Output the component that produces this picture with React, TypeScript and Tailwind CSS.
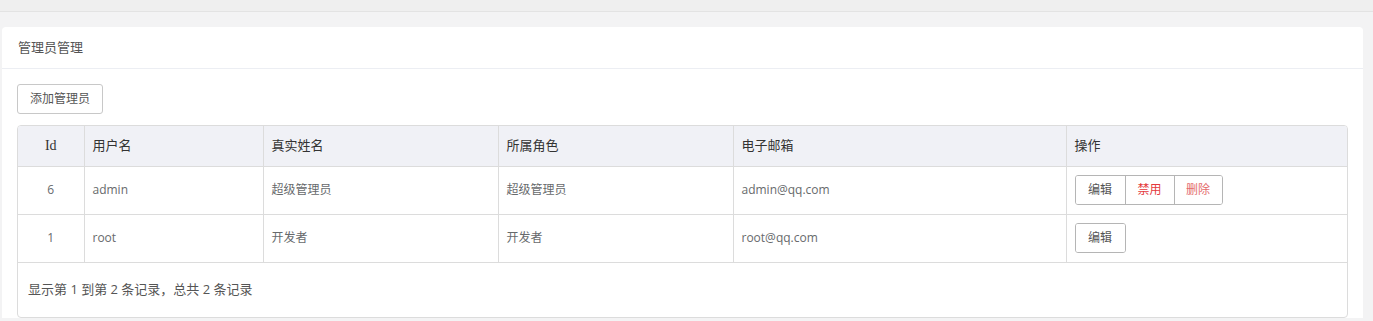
const rows = [
  { id: 6, user: 'admin', name: '超级管理员', role: '超级管理员', email: 'admin@qq.com', full: true },
  { id: 1, user: 'root', name: '开发者', role: '开发者', email: 'root@qq.com', full: false },
];

export default function App() {
  return (
    <div
      className="h-[321px] w-full overflow-hidden bg-[#f3f3f4] text-[#676a6c]"
      style={{ fontFamily: '"Open Sans", "Noto Sans CJK SC", sans-serif' }}
    >
      <div className="h-[12px] border-b border-[#e3e3e3] bg-[#efefef]" />
      <div className="ml-[2px] mr-[10px] mt-[15px] rounded-t-[4px] bg-white">
        <div className="flex h-[42px] items-center border-b border-[#eceef3] px-[16px] text-[13px] text-[#555]">
          管理员管理
        </div>
        <div className="px-[15px] pt-[15px]">
          <button className="h-[30px] rounded-[3px] border border-[#c8c8c8] bg-white px-[12px] text-[12px] text-[#555]">
            添加管理员
          </button>
          <div className="mt-[11px] overflow-hidden rounded-[4px] border border-[#dcdcdc]">
            <table className="w-full table-fixed border-collapse text-[12px]">
              <colgroup>
                <col className="w-[66px]" />
                <col className="w-[179px]" />
                <col className="w-[235px]" />
                <col className="w-[235px]" />
                <col className="w-[333px]" />
                <col />
              </colgroup>
              <thead>
                <tr className="h-[40px] bg-[#f0f1f6] text-[13px] text-[#333]">
                  <th className="text-center text-[14px] font-normal" style={{ fontFamily: '"Liberation Serif", serif', fontWeight: 400 }}>Id</th>
                  <th className="border-l border-[#dcdcdc] px-[8px] text-left font-normal">用户名</th>
                  <th className="border-l border-[#dcdcdc] px-[8px] text-left font-normal">真实姓名</th>
                  <th className="border-l border-[#dcdcdc] px-[8px] text-left font-normal">所属角色</th>
                  <th className="border-l border-[#dcdcdc] px-[8px] text-left font-normal">电子邮箱</th>
                  <th className="border-l border-[#dcdcdc] px-[8px] text-left font-normal">操作</th>
                </tr>
              </thead>
              <tbody>
                {rows.map((r) => (
                  <tr key={r.id} className="h-[48px] border-t border-[#dcdcdc]">
                    <td className="text-center">{r.id}</td>
                    <td className="border-l border-[#dcdcdc] px-[8px]">{r.user}</td>
                    <td className="border-l border-[#dcdcdc] px-[8px]">{r.name}</td>
                    <td className="border-l border-[#dcdcdc] px-[8px]">{r.role}</td>
                    <td className="border-l border-[#dcdcdc] px-[8px]">{r.email}</td>
                    <td className="border-l border-[#dcdcdc] px-[8px]">
                      <div className="inline-flex h-[30px] overflow-hidden rounded-[3px] border border-[#b5b5b5]">
                        <button className="w-[49px] bg-white text-[12px] text-[#555]">编辑</button>
                        {r.full && (
                          <>
                            <button className="w-[49px] border-l border-[#b5b5b5] bg-white text-[12px] text-[#e4393c]">禁用</button>
                            <button className="w-[48px] border-l border-[#b5b5b5] bg-white text-[12px] text-[#e46b6b]">删除</button>
                          </>
                        )}
                      </div>
                    </td>
                  </tr>
                ))}
                <tr className="h-[55px] border-t border-[#dcdcdc]">
                  <td colSpan={6} className="px-[10px] text-[13px] text-[#555]">
                    显示第 1 到第 2 条记录，总共 2 条记录
                  </td>
                </tr>
              </tbody>
            </table>
          </div>
        </div>
      </div>
    </div>
  );
}
